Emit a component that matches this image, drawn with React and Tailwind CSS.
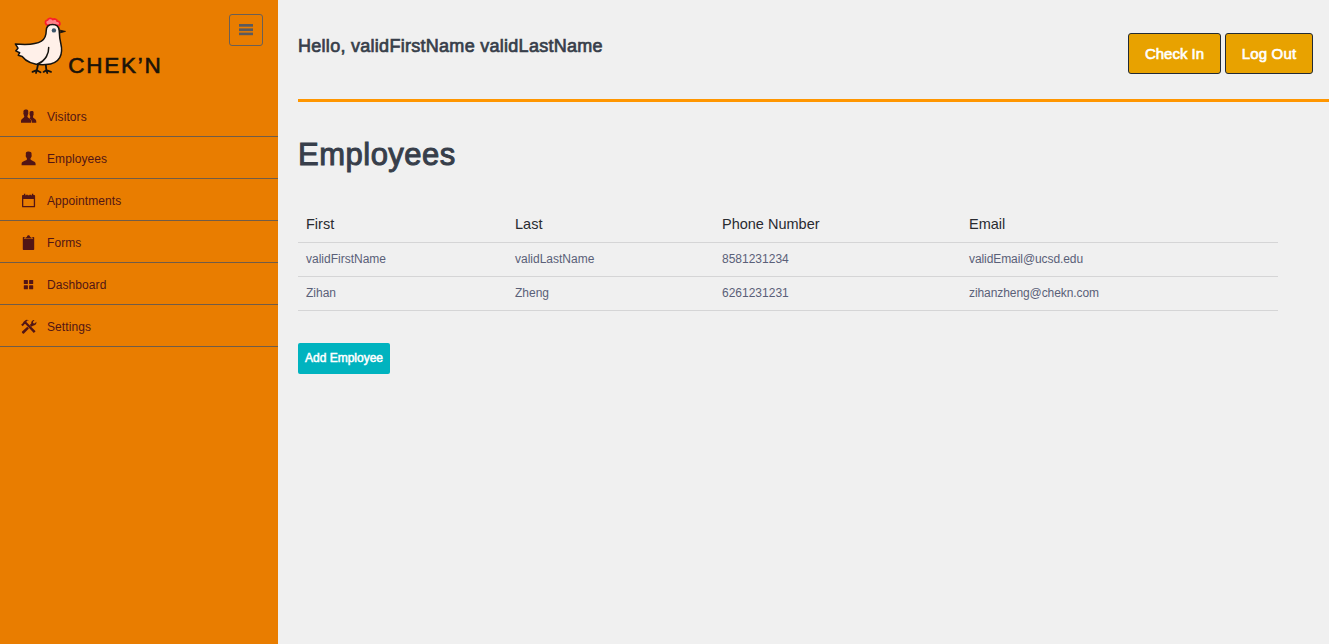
function Icon({ children }) {
  return (
    <svg viewBox="0 0 16 16" className="h-4 w-4 shrink-0" fill="currentColor">
      {children}
    </svg>
  );
}

const icons = {
  Visitors: (
    <Icon>
      <path d="M2.800 1.300C3.300.5 5.300.2 6.400.7c1 .5 1 1.700.8 3.100.3.300.2 1.300-.3 1.600-.1 1-.5 1.300-.5 2.200 0 1.700 3.800 2 3.800 4.700v1.500H0v-1.500c0-2.700 3.300-3 3.300-4.700 0-.9-.5-1.200-.6-2.200-.4-.4-.5-1.400-.2-1.600-.2-1-.2-1.800.3-2.500z" />
      <path d="M8.900 2.500c.6-.7 2.500-.8 3.200-.2.6.6.6 1.400.4 2.500.3.200.2 1.200-.2 1.400-.1.900-.3 1.100-.3 1.900 0 1.500 3.300 1.600 3.300 4.300v1.400h-4.300c0-2.500-1.200-3.700-2.700-4.600.7-.4 1-.8 1-1.300 0-.6-.3-.7-.5-1.600-.3-.200-.4-1-.1-1.300-.2-.8-.2-1.900.2-2.500z" />
    </Icon>
  ),
  Employees: (
    <Icon>
      <path d="M5.100 1.300C5.900.2 8.600.1 9.700.9c1 .7 1 1.900.8 3.300.4.300.3 1.400-.2 1.700-.2 1-.9 1.200-.9 2.100 0 1.900 5.200 1.700 5.200 4.700v1.500H.6v-1.500C.6 9.700 6 10 6 8c0-.9-.7-1.100-.9-2.100-.5-.3-.6-1.400-.2-1.700-.2-1.200-.2-2.200.2-2.900z" />
    </Icon>
  ),
  Appointments: (
    <Icon>
      <path
        fillRule="evenodd"
        d="M1.900 1.900h1V.700h1.400v1.500h.8v-.5h1.700v.5h1.600v-.5h1.700v.5h.8V.7h1.400v1.200h.9c.5 0 .9.400.9.900v10.600c0 .5-.4.900-.9.900H1.900c-.5 0-.9-.4-.9-.9V2.800c0-.5.4-.9.900-.9zm.4 4v7.100h10.500V5.900z"
      />
    </Icon>
  ),
  Forms: (
    <Icon>
      <path d="M4.200 3.400c0-.8.8-1.200 1.600-1.400C6.100.800 6.600.2 7.500.2s1.400.6 1.700 1.800c.8.200 1.600.6 1.600 1.400z" />
      <path d="M2.500 1.900h1.500c-.5.500-.700 1.100-.7 2.100h8.400c0-1-.2-1.600-.7-2.100h1.500c.4 0 .7.300.7.700v11.600c0 .5-.3.800-.7.800h-10c-.4 0-.7-.3-.7-.8V2.600c0-.4.3-.7.700-.7z" />
    </Icon>
  ),
  Dashboard: (
    <Icon>
      <rect x="2.800" y="3" width="4.100" height="4.100" rx=".5" />
      <rect x="8.100" y="3" width="4.100" height="4.100" rx=".5" />
      <rect x="2.800" y="8.200" width="4.100" height="4.100" rx=".5" />
      <rect x="8.100" y="8.200" width="4.100" height="4.100" rx=".5" />
    </Icon>
  ),
  Settings: (
    <Icon>
      <path d="M.1 5.700 1.800 4.200c.3-.3.2-.8.600-1.200L4.100 1.400C5.200.5 6.700.7 8 1.300c-1.300.1-2.200.5-2.500 1.100-.2.500.1.900.6 1.400L14.600 12.300l-1.800 1.800-8.200-8.800c-.5-.4-.8-.4-1.200-.1L1.800 7.300z" />
      <path d="m1.100 12.500 5.200-4.700 1.600 1.700-4.900 4.900c-.4.400-.8.400-1.200 0l-.7-.7c-.4-.4-.4-.8 0-1.200zM8.700 5.900l1.500-1.500c-.1-1.500.8-3.200 2.400-3.500l.9.100-1.600 1.900.4 1.300 1.300.3 1.800-1.700c.4 1.700-.9 3.600-2.500 3.800l-1 .1-1.400 1.100z" />
    </Icon>
  ),
};

function Logo() {
  return (
    <svg viewBox="0 0 170 90" className="h-[90px] w-[170px]" role="img">
      <g strokeLinecap="round" strokeLinejoin="round">
        <path
          d="M46.600 24.800c-1.800-1.600-1.500-4.500 1-4.700.5-2 4-2.300 5.200-.6 1.800-1.200 4.300-.1 4.400 1.700 2.300-.2 3.600 2.300 2 4.300z"
          fill="#ff8088"
          stroke="#f91f2b"
          strokeWidth="1.800"
        />
        <path
          d="M38 64.500l-1.200 5.700-4.300 1.700m4.300-1.700-.8 2.800m.8-2.800 3.700 2M45.800 64.500l.5 5.700-2.700 1.700m2.700-1.700 1 2.800m-1-2.800 4.700 1.700"
          fill="none"
          stroke="#15130f"
          strokeWidth="1.800"
        />
        <path
          d="M46.200 31c0-4.300 2.700-6.500 6.400-6.500 4 0 6.300 2.300 6.600 6.100.2 5.500.4 8.200 1.600 12.900 2.500 10.200-.3 20.300-15 21.100-11 .6-19.300-2.400-23.600-8.100l-4-1.200 1.500-2.600-4-1.800 2.300-2.700-2.600-4.200c9 .8 19.500 1.300 26-2.800 3.500-2.300 4.800-5.700 4.800-10.200z"
          fill="#fff0e9"
          stroke="#15130f"
          strokeWidth="1.500"
        />
        <path d="M48.700 47.500c.2 5.500-2.500 13-11.200 16.500" fill="none" stroke="#15130f" strokeWidth="1.500" />
        <path d="M60.400 30.200 65.500 31.400l-5.100 1.400z" fill="#15130f" stroke="#15130f" strokeWidth=".8" />
        <circle cx="53.900" cy="30.400" r="2.200" fill="#3c566c" />
      </g>
      <text
        x="68.200"
        y="73.100"
        textLength="92.500"
        lengthAdjust="spacing"
        fill="#1b1309"
        stroke="#1b1309"
        strokeWidth=".6"
        className="font-['Liberation_Sans',sans-serif] text-[22.500px]"
      >
        CHEK’N
      </text>
    </svg>
  );
}

const employees = [
  ["validFirstName", "validLastName", "8581231234", "validEmail@ucsd.edu"],
  ["Zihan", "Zheng", "6261231231", "zihanzheng@chekn.com"],
];

function Sidebar() {
  return (
    <aside className="w-[278px] shrink-0 bg-[#e97d00]">
      <div className="flex h-[95px] items-start justify-between pr-[15px]">
        <Logo />
        <button className="mt-[14px] flex h-8 w-[34px] items-center justify-center rounded-[3px] border border-[#6b5f55]">
          <svg viewBox="0 0 14 12" className="h-3 w-[14px]" fill="#5a5a5e">
            <rect y="0" width="14" height="2.700" />
            <rect y="4.400" width="14" height="2.700" />
            <rect y="8.600" width="14" height="2.600" />
          </svg>
        </button>
      </div>
      <nav>
        {Object.keys(icons).map((name) => (
          <a
            key={name}
            className="flex h-[42px] items-center gap-[10px] border-b border-[#705c48] pl-[21px] pt-[3px] text-xs tracking-[0.08px] text-[#521515]"
          >
            {icons[name]}
            <span>{name}</span>
          </a>
        ))}
      </nav>
    </aside>
  );
}

export default function App() {
  return (
    <div className="flex h-screen overflow-hidden bg-[#f0f0f0] font-['Liberation_Sans',Arial,sans-serif] text-[#373e4a]">
      <Sidebar />
      <main className="min-w-0 flex-1 pl-5">
        <header className="flex h-[102px] items-start justify-between border-b-[3px] border-[#ff9600] pr-4">
          <h4 className="pt-[35px] text-[18px] leading-[22px] tracking-[0.28px] [-webkit-text-stroke:0.7px]">
            Hello, validFirstName validLastName
          </h4>
          <div className="flex gap-1 pt-[33px] text-[15px] text-white [-webkit-text-stroke:0.6px]">
            <button className="h-[41px] w-[93px] rounded-[3px] border border-[#222b35] bg-[#e8a200] pt-px">Check In</button>
            <button className="h-[41px] w-[88px] rounded-[3px] border border-[#222b35] bg-[#e8a200] pt-px tracking-[0.15px]">Log Out</button>
          </div>
        </header>
        <h1 className="pt-[35px] text-[31px] leading-9 tracking-[0.5px] [-webkit-text-stroke:1px]">Employees</h1>
        <table className="mt-[33px] w-[980px] table-fixed text-left text-xs">
          <colgroup>
            <col className="w-[209px]" />
            <col className="w-[207px]" />
            <col className="w-[247px]" />
            <col />
          </colgroup>
          <thead>
            <tr className="h-[36px] border-b border-[#d5d5d6] text-[14.500px] text-[#292b30]">
              {["First", "Last", "Phone Number", "Email"].map((h) => (
                <th key={h} className="px-2 pt-0.5 font-normal">{h}</th>
              ))}
            </tr>
          </thead>
          <tbody>
            {employees.map((row) => (
              <tr key={row[0]} className="h-[34px] border-b border-[#d5d5d6] text-[#5a6078]">
                {row.map((cell, i) => (
                  <td key={cell} className={i === 3 ? "px-2 tracking-[-0.08px]" : "px-2"}>{cell}</td>
                ))}
              </tr>
            ))}
          </tbody>
        </table>
        <button className="mt-8 h-[31px] w-[92px] rounded-[2px] bg-[#00b3bf] text-xs text-white [-webkit-text-stroke:0.5px]">
          Add Employee
        </button>
      </main>
    </div>
  );
}
